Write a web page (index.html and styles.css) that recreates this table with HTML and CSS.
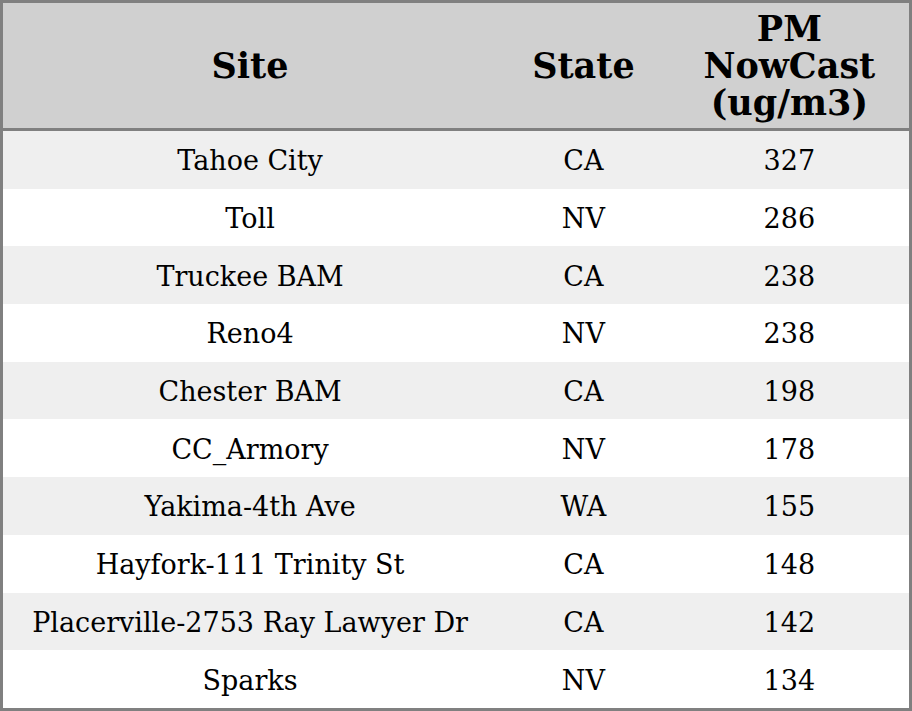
FILE: index.html
```html
<!DOCTYPE html>
<html>
<head>
<meta charset="utf-8">
<link rel="stylesheet" href="styles.css">
</head>
<body>
<table class="aq">
  <colgroup>
    <col class="c-site">
    <col class="c-state">
    <col class="c-pm">
  </colgroup>
  <thead>
    <tr><th>Site</th><th>State</th><th>PM<br>NowCast<br>(ug/m3)</th></tr>
  </thead>
  <tbody>
    <tr><td>Tahoe City</td><td>CA</td><td>327</td></tr>
    <tr><td>Toll</td><td>NV</td><td>286</td></tr>
    <tr><td>Truckee BAM</td><td>CA</td><td>238</td></tr>
    <tr><td>Reno4</td><td>NV</td><td>238</td></tr>
    <tr><td>Chester BAM</td><td>CA</td><td>198</td></tr>
    <tr><td>CC_Armory</td><td>NV</td><td>178</td></tr>
    <tr><td>Yakima-4th Ave</td><td>WA</td><td>155</td></tr>
    <tr><td>Hayfork-111 Trinity St</td><td>CA</td><td>148</td></tr>
    <tr><td>Placerville-2753 Ray Lawyer Dr</td><td>CA</td><td>142</td></tr>
    <tr><td>Sparks</td><td>NV</td><td>134</td></tr>
  </tbody>
</table>
</body>
</html>
```
FILE: styles.css
```css
html, body {
  margin: 0;
  padding: 0;
  background: #ffffff;
}
.aq {
  width: 912px;
  height: 711px;
  border-collapse: collapse;
  table-layout: fixed;
  border: 3px solid #808080;
  font-family: "DejaVu Serif", serif;
  color: #000;
}
.c-site { width: 494px; }
.c-state { width: 172px; }
.c-pm { width: 240px; }
.aq th {
  background: #d0d0d0;
  font-size: 35px;
  font-weight: bold;
  line-height: 37px;
  text-align: center;
  padding: 0;
  height: 125px;
  border-bottom: 3px solid #808080;
}
.aq td {
  font-size: 27px;
  text-align: center;
  padding: 2px 0 0;
  height: 55.7px;
}
.aq tbody tr:nth-child(odd) td { background: #efefef; }
.aq tbody tr:nth-child(even) td { background: #ffffff; }
```
